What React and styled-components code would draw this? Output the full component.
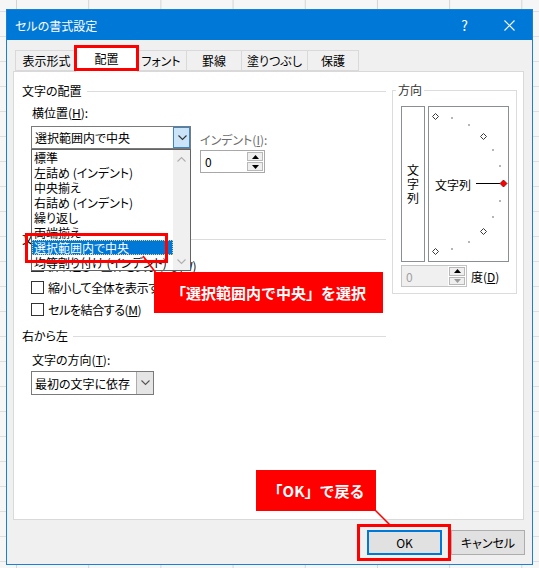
import React from "react";
import styled, { createGlobalStyle } from "styled-components";

const UI = `"Noto Sans CJK JP", "Noto Sans", sans-serif`;

const Global = createGlobalStyle`
  html, body { margin: 0; padding: 0; }
  body {
    font-family: ${UI};
    font-size: 12px;
    color: #000;
    font-feature-settings: "palt";
  }
`;

const Stage = styled.div`
  position: relative;
  width: 539px;
  height: 568px;
  overflow: hidden;
  box-sizing: border-box;
  padding: 9px 0 0 6px;
  background-color: #f6f6f6;
  background-image:
    linear-gradient(to right, #d4d4d4 1px, transparent 1px),
    linear-gradient(to bottom, #dedede 1px, transparent 1px);
  background-size: 72.2px 100%, 100% 25px;
  background-position: 16px 0, 0 11px;
`;

const Dialog = styled.div`
  width: 527px;
  height: 556px;
  box-sizing: border-box;
  border: 1px solid #1a80d6;
  background: #f0f0f0;
  display: flex;
  flex-direction: column;
`;

const TitleBar = styled.div`
  flex: none;
  height: 30px;
  background: #0078d7;
  color: #fff;
  display: flex;
  align-items: center;
  padding-left: 8px;
`;

const TitleText = styled.div`
  font-size: 12px;
  flex: 1;
`;

const TitleButton = styled.div`
  width: 45px;
  height: 30px;
  display: flex;
  align-items: center;
  justify-content: center;
  font-size: 14px;
  color: #fff;
`;

const Body = styled.div`
  flex: 1;
  display: flex;
  flex-direction: column;
  padding: 7px 8px 0 6px;
`;

const TabStrip = styled.div`
  position: relative;
  z-index: 1;
  display: flex;
  align-items: flex-end;
  height: 24px;
  padding-left: 2px;
`;

const Tab = styled.div`
  box-sizing: border-box;
  width: ${(p) => (p.$active ? p.$w + 4 : p.$w)}px;
  height: ${(p) => (p.$active ? 25 : 21)}px;
  margin: ${(p) => (p.$active ? "0 -2px -1px -3px" : p.$first ? "0" : "0 0 0 -1px")};
  border: 1px solid #d9d9d9;
  border-bottom: ${(p) => (p.$active ? "none" : "1px solid #d9d9d9")};
  background: ${(p) => (p.$active ? "#fff" : "#f0f0f0")};
  position: relative;
  z-index: ${(p) => (p.$active ? 2 : 1)};
  display: flex;
  align-items: center;
  justify-content: center;
  padding-bottom: ${(p) => (p.$active ? "3px" : "0")};
  font-size: 12px;
  color: #000;
`;

const Panel = styled.div`
  box-sizing: border-box;
  height: 449px;
  border: 1px solid #d9d9d9;
  background: #fff;
  display: grid;
  grid-template-columns: 364px 125px;
  column-gap: 6px;
  padding: 0 6px 0 8px;
  align-items: start;
`;

const LeftCol = styled.div`
  display: flex;
  flex-direction: column;
`;

const GroupHeader = styled.div`
  display: flex;
  align-items: center;
  height: 16px;
  line-height: 16px;
  margin-top: ${(p) => p.$mt}px;
  color: #000;
  &::after {
    content: "";
    flex: 1;
    height: 1px;
    background: #dcdcdc;
    margin-left: 5px;
  }
`;

const FieldLabel = styled.div`
  height: 16px;
  line-height: 16px;
  margin-top: ${(p) => p.$mt}px;
  margin-left: 10px;
  color: #000;
`;

const ComboRow = styled.div`
  display: flex;
  align-items: flex-start;
  margin-top: ${(p) => p.$mt}px;
  margin-left: 9px;
`;

const ComboWrap = styled.div`
  position: relative;
  margin-top: ${(p) => p.$mt || 0}px;
  margin-left: ${(p) => p.$ml || 0}px;
  width: ${(p) => p.$w}px;
`;

const ComboBox = styled.div`
  box-sizing: border-box;
  width: 100%;
  height: ${(p) => p.$h}px;
  border: 1px solid #7a7a7a;
  background: #fff;
  display: flex;
  align-items: stretch;
`;

const ComboValue = styled.div`
  flex: 1;
  display: flex;
  align-items: center;
  padding-left: 3px;
  white-space: nowrap;
  overflow: hidden;
`;

const ComboButton = styled.div`
  box-sizing: border-box;
  width: ${(p) => p.$w}px;
  display: flex;
  align-items: center;
  justify-content: center;
  background: ${(p) => (p.$open ? "#cce4f7" : "#e5e5e5")};
  border-left: 1px solid ${(p) => (p.$open ? "#3d86c6" : "#adadad")};
  ${(p) => (p.$open ? "outline: 1px solid #3d86c6; outline-offset: -1px;" : "")}
`;

const DropList = styled.div`
  position: absolute;
  left: 0;
  top: 23px;
  z-index: 5;
  box-sizing: border-box;
  width: 160px;
  height: 122px;
  border: 1px solid #646464;
  background: #fff;
  display: flex;
`;

const ListItems = styled.div`
  flex: 1;
  overflow: hidden;
`;

const ListItem = styled.div`
  height: 15px;
  line-height: 15px;
  padding-left: 2px;
  white-space: nowrap;
  background: ${(p) => (p.$sel ? "#0078d7" : "transparent")};
  color: ${(p) => (p.$sel ? "#fff" : "#000")};
  ${(p) => (p.$sel ? "outline: 1px dotted #e8d27a; outline-offset: -1px;" : "")}
`;

const ScrollTrack = styled.div`
  width: 17px;
  background: #f0f0f0;
  display: flex;
  flex-direction: column;
  justify-content: space-between;
`;

const ScrollButton = styled.div`
  height: 17px;
  display: flex;
  align-items: center;
  justify-content: center;
`;

const IndentBlock = styled.div`
  margin-left: 9px;
  margin-top: 6px;
  display: flex;
  flex-direction: column;
`;

const IndentLabel = styled.div`
  height: 16px;
  line-height: 16px;
  color: #6d6d6d;
`;

const SpinBox = styled.div`
  box-sizing: border-box;
  width: ${(p) => p.$w}px;
  height: ${(p) => p.$h}px;
  margin-top: ${(p) => p.$mt || 0}px;
  border: 1px solid ${(p) => (p.$disabled ? "#c4c4c4" : "#a8a8a8")};
  background: ${(p) => (p.$disabled ? "#f0f0f0" : "#fff")};
  display: flex;
  align-items: stretch;
`;

const SpinValue = styled.div`
  flex: 1;
  display: flex;
  align-items: center;
  padding-left: 4px;
  color: ${(p) => (p.$disabled ? "#a0a0a0" : "#000")};
`;

const SpinButtons = styled.div`
  width: 16px;
  display: flex;
  flex-direction: column;
  padding: 1px;
  gap: 1px;
  background: #fff;
`;

const SpinButton = styled.div`
  flex: 1;
  box-sizing: border-box;
  border: 1px solid #b8b8b8;
  background: #efefef;
  display: flex;
  align-items: center;
  justify-content: center;
`;

const CheckRow = styled.div`
  display: flex;
  align-items: center;
  height: 22px;
  margin-top: ${(p) => p.$mt || 0}px;
  margin-left: 9px;
  gap: 4px;
  white-space: nowrap;
  letter-spacing: -0.4px;
`;

const CheckBox = styled.div`
  box-sizing: border-box;
  width: 13px;
  height: 13px;
  border: 1px solid #333;
  background: #fff;
`;

const Fieldset = styled.fieldset`
  margin: 10px 0 0;
  min-width: 0;
  box-sizing: border-box;
  border: 1px solid #dcdcdc;
  padding: 8px 7px 6px 8px;
  display: flex;
  flex-direction: column;
`;

const Legend = styled.legend`
  padding: 0 2px;
  margin-left: -5px;
  line-height: 16px;
  height: 16px;
  color: #333;
`;

const OrientRow = styled.div`
  display: flex;
  gap: 3px;
  height: 156px;
`;

const VertBox = styled.div`
  box-sizing: border-box;
  width: 24px;
  height: 156px;
  border: 1px solid #8a8e96;
  display: flex;
  align-items: center;
  justify-content: center;
`;

const VertText = styled.span`
  writing-mode: vertical-rl;
  text-orientation: upright;
  letter-spacing: 2px;
  font-size: 12px;
  padding-top: 2px;
`;

const RotBox = styled.div`
  box-sizing: border-box;
  width: 81px;
  height: 156px;
  border: 1px solid #8a8e96;
  display: flex;
`;

const DegreeRow = styled.div`
  display: flex;
  align-items: center;
  margin-top: 3px;
  gap: 4px;
`;

const Footer = styled.div`
  flex: 1;
  display: flex;
  justify-content: flex-end;
  align-items: flex-start;
  padding: 10px 0 0 0;
  margin-right: -1px;
  gap: 9px;
`;

const Button = styled.div`
  box-sizing: border-box;
  width: ${(p) => p.$w}px;
  height: 25px;
  background: #e1e1e1;
  border: ${(p) => (p.$primary ? "2px solid #0078d7" : "1px solid #adadad")};
  display: flex;
  align-items: center;
  justify-content: center;
  font-size: 12px;
`;

const Mark = styled.div`
  position: absolute;
  box-sizing: border-box;
  border: 3px solid #ff0000;
  z-index: 20;
  pointer-events: none;
`;

const Callout = styled.div`
  position: absolute;
  z-index: 20;
  box-sizing: border-box;
  background: #ff0000;
  color: #fff;
  font-weight: 700;
  font-size: 15px;
  font-feature-settings: normal;
  display: flex;
  align-items: center;
  justify-content: center;
  white-space: nowrap;
`;

const PointerLayer = styled.svg`
  position: absolute;
  left: 0;
  top: 0;
  z-index: 21;
  pointer-events: none;
`;

const Chevron = ({ color = "#333" }) => (
  <svg width="9" height="6" viewBox="0 0 9 6">
    <path d="M0.5 0.5 L4.5 4.5 L8.5 0.5" fill="none" stroke={color} strokeWidth="1.1" />
  </svg>
);

const ChevronUp = ({ color = "#a0a0a0" }) => (
  <svg width="9" height="6" viewBox="0 0 9 6">
    <path d="M0.5 5.5 L4.5 1.5 L8.5 5.5" fill="none" stroke={color} strokeWidth="1.1" />
  </svg>
);

const Tri = ({ up, color = "#000" }) => (
  <svg width="7" height="4" viewBox="0 0 7 4">
    <path d={up ? "M0 4 L3.5 0 L7 4Z" : "M0 0 L3.5 4 L7 0Z"} fill={color} />
  </svg>
);

const CloseIcon = () => (
  <svg width="11" height="11" viewBox="0 0 11 11">
    <path d="M0.5 0.5 L10.5 10.5 M10.5 0.5 L0.5 10.5" stroke="#fff" strokeWidth="1.1" />
  </svg>
);

function Dial() {
  const cx = 6;
  const cy = 76.5;
  const r = 67.5;
  const pt = (a) => [cx + r * Math.cos((a * Math.PI) / 180), cy - r * Math.sin((a * Math.PI) / 180)];
  const diamonds = [90, 45, -45, -90];
  const dots = [75, 60, 30, 15, -15, -30, -60, -75];
  const dia = (x, y, s) => `M${x} ${y - s} L${x + s} ${y} L${x} ${y + s} L${x - s} ${y}Z`;
  return (
    <svg width="79" height="154" viewBox="0 0 79 154">
      {dots.map((a) => {
        const [x, y] = pt(a);
        return <rect key={a} x={Math.round(x) - 1} y={Math.round(y) - 1} width="2" height="2" fill="#b5b5b5" />;
      })}
      {diamonds.map((a) => {
        const [x, y] = pt(a);
        return <path key={a} d={dia(Math.round(x) + 0.5, Math.round(y) + 0.5, 3)} fill="#fff" stroke="#3a3a3a" strokeWidth="1" />;
      })}
      <text x="6" y="77" dominantBaseline="central" fontSize="12" fontFamily={UI} fill="#000">
        文字列
      </text>
      <line x1="47" y1="76.5" x2="71" y2="76.5" stroke="#000" strokeWidth="1" />
      <path d={dia(74.5, 76.5, 3.5)} fill="#ff0000" stroke="#7a0000" strokeWidth="0.8" />
    </svg>
  );
}

const tabs = [
  { label: "表示形式", w: 63 },
  { label: "配置", w: 59, active: true },
  { label: "フォント", w: 52 },
  { label: "罫線", w: 56 },
  { label: "塗りつぶし", w: 67 },
  { label: "保護", w: 52 },
];

const items = [
  "標準",
  "左詰め (インデント)",
  "中央揃え",
  "右詰め (インデント)",
  "繰り返し",
  "両端揃え",
  "選択範囲内で中央",
  "均等割り付け (インデント)",
];

export default function App() {
  return (
    <>
      <Global />
      <Stage>
        <Dialog>
          <TitleBar>
            <TitleText>セルの書式設定</TitleText>
            <TitleButton>?</TitleButton>
            <TitleButton>
              <CloseIcon />
            </TitleButton>
          </TitleBar>
          <Body>
            <TabStrip>
              {tabs.map((t, i) => (
                <Tab key={t.label} $w={t.w} $active={t.active} $first={i === 0}>
                  {t.label}
                </Tab>
              ))}
            </TabStrip>
            <Panel>
              <LeftCol>
                <GroupHeader $mt={11}>文字の配置</GroupHeader>
                <FieldLabel $mt={6}>
                  横位置(<u>H</u>):
                </FieldLabel>
                <ComboRow $mt={5}>
                  <ComboWrap $w={160}>
                    <ComboBox $h={23}>
                      <ComboValue>選択範囲内で中央</ComboValue>
                      <ComboButton $w={17} $open>
                        <Chevron color="#333" />
                      </ComboButton>
                    </ComboBox>
                    <DropList>
                      <ListItems>
                        {items.map((it, i) => (
                          <ListItem key={it} $sel={i === 6}>
                            {it}
                          </ListItem>
                        ))}
                      </ListItems>
                      <ScrollTrack>
                        <ScrollButton>
                          <ChevronUp color="#b0b0b0" />
                        </ScrollButton>
                        <ScrollButton>
                          <Chevron color="#b0b0b0" />
                        </ScrollButton>
                      </ScrollTrack>
                    </DropList>
                  </ComboWrap>
                  <IndentBlock>
                    <IndentLabel>
                      インデント(<u>I</u>):
                    </IndentLabel>
                    <SpinBox $w={65} $h={23} $mt={2}>
                      <SpinValue>0</SpinValue>
                      <SpinButtons>
                        <SpinButton>
                          <Tri up />
                        </SpinButton>
                        <SpinButton>
                          <Tri />
                        </SpinButton>
                      </SpinButtons>
                    </SpinBox>
                  </IndentBlock>
                </ComboRow>
                <GroupHeader $mt={58}>文字の制御</GroupHeader>
                <CheckRow $mt={7}>
                  <CheckBox />
                  <span>
                    折り返して全体を表示する(<u>W</u>)
                  </span>
                </CheckRow>
                <CheckRow>
                  <CheckBox />
                  <span>
                    縮小して全体を表示する(<u>K</u>)
                  </span>
                </CheckRow>
                <CheckRow>
                  <CheckBox />
                  <span>
                    セルを結合する(<u>M</u>)
                  </span>
                </CheckRow>
                <GroupHeader $mt={8}>右から左</GroupHeader>
                <FieldLabel $mt={8}>
                  文字の方向(<u>T</u>):
                </FieldLabel>
                <ComboWrap $w={123} $mt={3} $ml={9}>
                  <ComboBox $h={24}>
                    <ComboValue>最初の文字に依存</ComboValue>
                    <ComboButton $w={17}>
                      <Chevron color="#555" />
                    </ComboButton>
                  </ComboBox>
                </ComboWrap>
              </LeftCol>
              <Fieldset>
                <Legend>方向</Legend>
                <OrientRow>
                  <VertBox>
                    <VertText>文字列</VertText>
                  </VertBox>
                  <RotBox>
                    <Dial />
                  </RotBox>
                </OrientRow>
                <DegreeRow>
                  <SpinBox $w={66} $h={22} $disabled>
                    <SpinValue $disabled>0</SpinValue>
                    <SpinButtons>
                      <SpinButton>
                        <Tri up />
                      </SpinButton>
                      <SpinButton>
                        <Tri color="#9a9a9a" />
                      </SpinButton>
                    </SpinButtons>
                  </SpinBox>
                  <span>
                    度(<u>D</u>)
                  </span>
                </DegreeRow>
              </Fieldset>
            </Panel>
            <Footer>
              <Button $w={75} $primary>
                OK
              </Button>
              <Button $w={74}>キャンセル</Button>
            </Footer>
          </Body>
        </Dialog>

        <Mark style={{ left: 74, top: 45, width: 65, height: 26 }} />
        <Mark style={{ left: 25, top: 233, width: 143, height: 30 }} />
        <Mark style={{ left: 357, top: 524, width: 94, height: 37 }} />
        <Callout style={{ left: 154, top: 272, width: 229, height: 41 }}>「選択範囲内で中央」を選択</Callout>
        <Callout style={{ left: 256, top: 470, width: 120, height: 41 }}>「OK」で戻る</Callout>
        <PointerLayer width="539" height="568" viewBox="0 0 539 568">
          <line x1="143" y1="256" x2="156" y2="273" stroke="#ff0000" strokeWidth="1.6" />
          <line x1="374" y1="509" x2="390" y2="525" stroke="#ff0000" strokeWidth="1.6" />
        </PointerLayer>
      </Stage>
    </>
  );
}
